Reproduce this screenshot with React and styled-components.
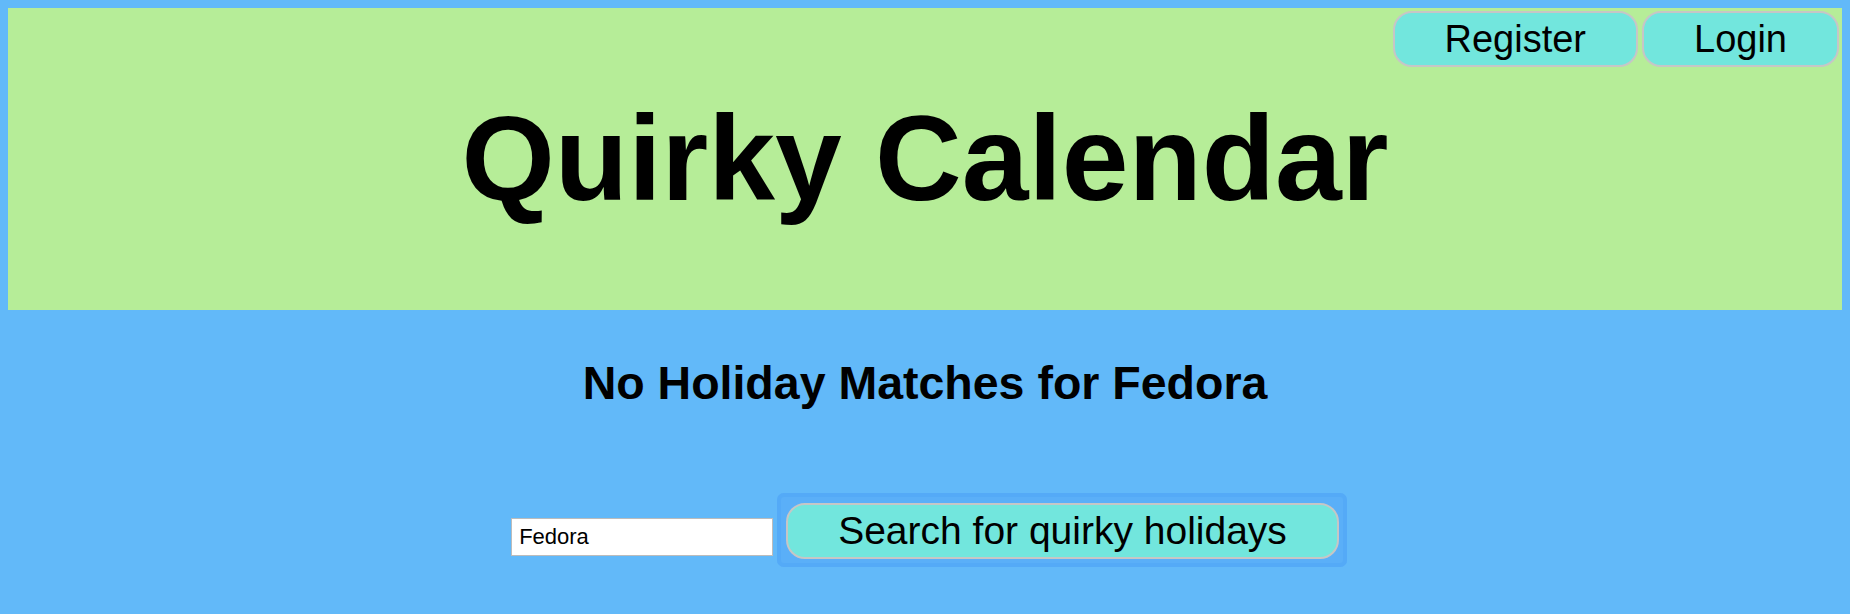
import React from "react";
import styled, { createGlobalStyle } from "styled-components";

const GlobalStyle = createGlobalStyle`
  html, body {
    background: #62b9f9;
  }
  body {
    margin: 8px;
    font-family: "Liberation Sans", Arial, Helvetica, sans-serif;
    color: #000;
  }
`;

const Header = styled.header`
  background: #b6ed98;
  padding: 3px;
  display: flex;
  flex-direction: column;
`;

const Nav = styled.nav`
  display: flex;
  justify-content: flex-end;
  gap: 4px;
`;

const PillButton = styled.button`
  font-family: "Liberation Sans", Arial, Helvetica, sans-serif;
  font-size: ${(p) => (p.$large ? "39px" : "38px")};
  line-height: 44px;
  padding: 4px 50px;
  border: 2px solid #c6c6c6;
  border-radius: 19px;
  background: #72e6dd;
  color: #000;
  cursor: pointer;
`;

/* focus halo around the focused search button; side margins keep it out of the centring */
const FocusRing = styled.span`
  display: inline-flex;
  padding: 10px 8px 8px 9px;
  margin: 0 -8px 0 -9px;
  border-radius: 7px;
  background: #5aaff8;
  box-shadow: inset 0 0 0 4px #54aaf7;
`;

const Title = styled.h1`
  margin: 31px 0 89px;
  font-size: 120px;
  line-height: 120px;
  font-weight: bold;
  text-align: center;
`;

const Main = styled.main`
  display: flex;
  flex-direction: column;
`;

const Message = styled.h2`
  margin: 50px 0 0;
  font-size: 46.5px;
  line-height: 47px;
  font-weight: bold;
  text-align: center;
`;

const SearchRow = styled.form`
  display: flex;
  justify-content: center;
  align-items: flex-start;
  gap: 13px;
  margin-top: 86px;
`;

const SearchInput = styled.input`
  box-sizing: border-box;
  width: 262px;
  height: 38px;
  margin-top: 25px;
  padding: 0 7px;
  border: 1px solid #bcbcbc;
  outline: 1px solid #fff;
  outline-offset: -2px;
  background: #fff;
  font-family: "Liberation Sans", Arial, Helvetica, sans-serif;
  font-size: 22px;
  color: #000;
`;

export default function App() {
  return (
    <>
      <GlobalStyle />
      <Header>
        <Nav>
          <PillButton type="button">Register</PillButton>
          <PillButton type="button">Login</PillButton>
        </Nav>
        <Title>Quirky Calendar</Title>
      </Header>
      <Main>
        <Message>No Holiday Matches for Fedora</Message>
        <SearchRow onSubmit={(e) => e.preventDefault()}>
          <SearchInput type="text" defaultValue="Fedora" />
          <FocusRing>
            <PillButton type="submit" $large>
              Search for quirky holidays
            </PillButton>
          </FocusRing>
        </SearchRow>
      </Main>
    </>
  );
}
